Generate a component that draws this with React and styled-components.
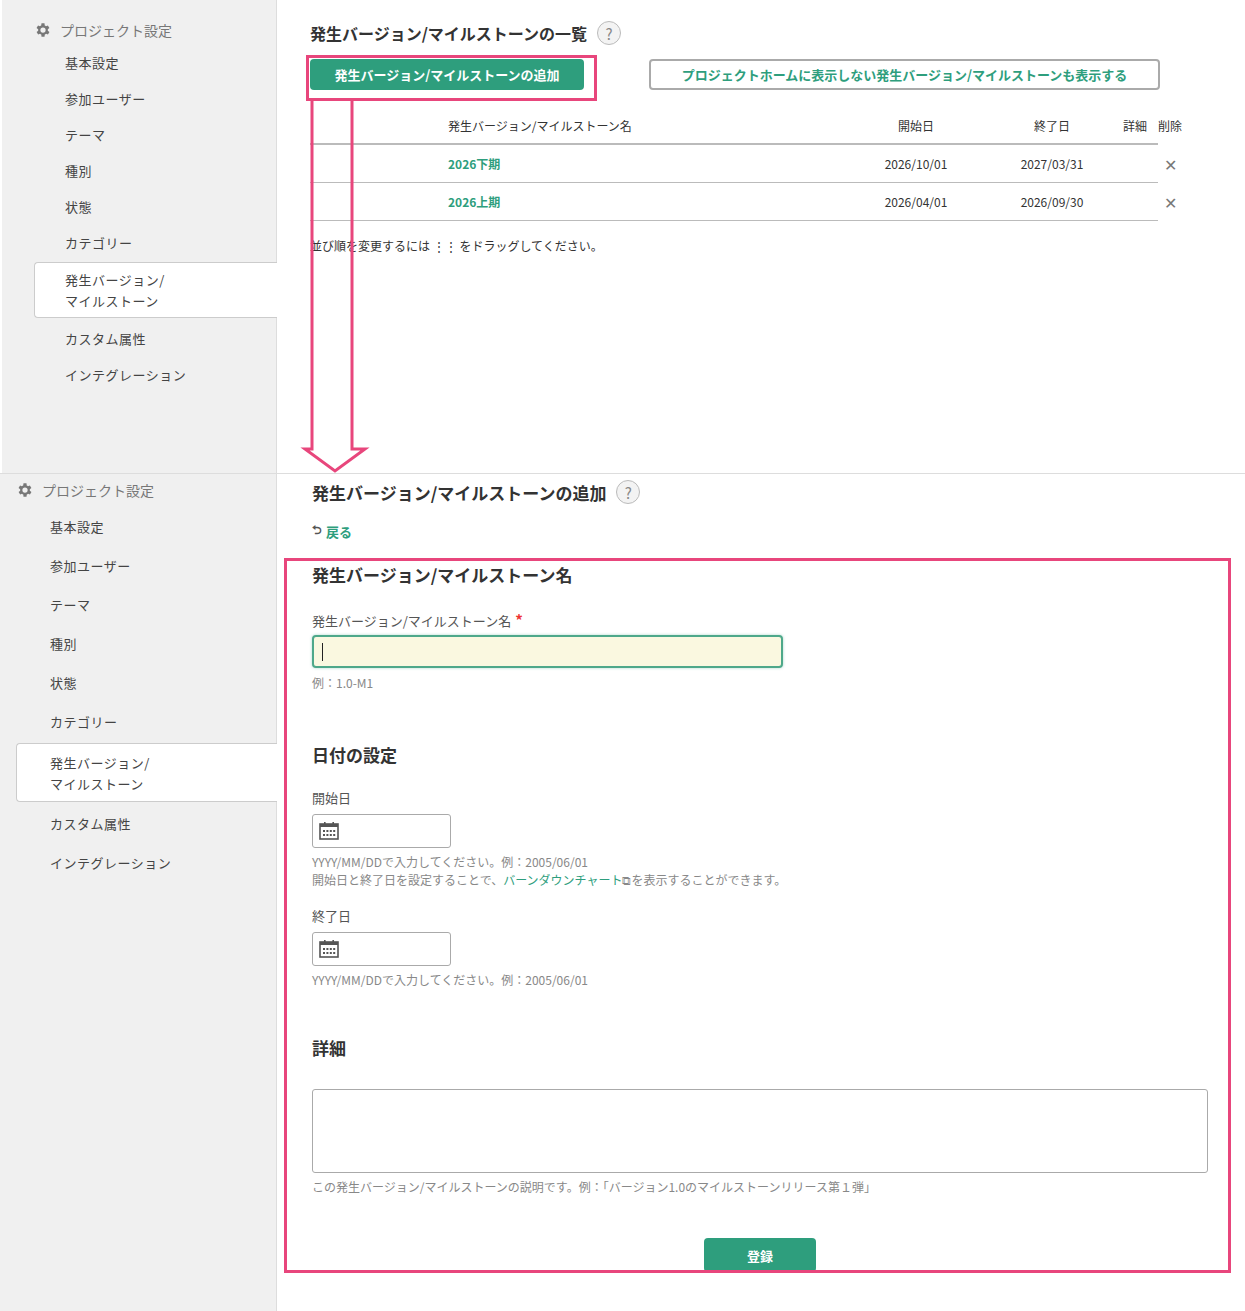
import React from 'react';
import styled, { createGlobalStyle } from 'styled-components';

const Global = createGlobalStyle`
  body { margin: 0; font-family: "Noto Sans CJK JP", "Noto Sans", sans-serif; color: #333; background: #fff; }
`;

const green = '#2e9e7d';
const pink = '#e8467c';

const Page = styled.div`
  position: relative;
  width: 1245px;
  height: 1311px;
  overflow: hidden;
`;

const Panel = styled.div`
  display: flex;
  height: ${p => p.h}px;
  padding-left: ${p => p.inset}px;
  border-top: ${p => (p.top ? '1px solid #ddd' : 'none')};
`;

const Sidebar = styled.div`
  width: ${p => p.w}px;
  flex-shrink: 0;
  background: #f0f0f0;
  border-right: 1px solid #ddd;
  padding-top: ${p => p.pt}px;
  box-sizing: border-box;
`;

const SideHead = styled.div`
  display: flex;
  align-items: center;
  gap: 8px;
  padding-left: ${p => p.pl}px;
  font-size: 14px;
  color: #777;
  height: 22px;
  margin-bottom: ${p => p.mb}px;
`;

const SideItem = styled.div`
  padding-left: ${p => p.pl}px;
  font-size: 13px;
  color: #444;
  height: ${p => p.h}px;
  display: flex;
  align-items: center;
  line-height: 21px;
  letter-spacing: 0.5px;
  ${p => p.active && `
    background: #fff;
    border: 1px solid #ccc;
    border-right: none;
    border-radius: 4px 0 0 4px;
    margin-left: ${p.ml}px;
    padding-left: ${p.pl - p.ml - 1}px;
    margin-right: -1px;
    height: ${p.ah}px;
    margin-top: 2px;
    margin-bottom: 2px;
  `}
`;

const Main = styled.div`
  flex: 1;
  padding: ${p => p.pad};
  box-sizing: border-box;
`;

const Title = styled.h1`
  margin: 0;
  font-size: ${p => p.fs || 16}px;
  font-weight: 700;
  color: #333;
  display: flex;
  align-items: center;
  gap: 10px;
  height: 24px;
`;

const Help = styled.span`
  width: 22px;
  height: 22px;
  border-radius: 50%;
  border: 1px solid #bbb;
  background: #f3f3f3;
  color: #888;
  font-size: 15px;
  font-weight: 400;
  display: inline-flex;
  align-items: center;
  justify-content: center;
`;

const ButtonRow = styled.div`
  display: flex;
  align-items: center;
  gap: 65px;
  margin-top: 14px;
`;

const PrimaryBtn = styled.button`
  background: ${green};
  color: #fff;
  border: none;
  border-radius: 4px;
  font: 700 13px "Noto Sans CJK JP", sans-serif;
  height: ${p => p.h || 31}px;
  width: ${p => p.w}px;
  cursor: pointer;
`;

const OutlineBtn = styled.button`
  background: #fff;
  color: ${green};
  border: 2px solid #aaa;
  border-radius: 4px;
  font: 700 13px "Noto Sans CJK JP", sans-serif;
  height: 31px;
  width: 511px;
`;

const Table = styled.div`
  width: 848px;
  margin-top: 18px;
  font-size: 12px;
`;

const Row = styled.div`
  display: grid;
  grid-template-columns: 138px 400px 136px 136px 30px 40px;
  align-items: center;
  height: ${p => (p.head ? 35 : 37)}px;
  border-bottom: ${p => (p.head ? '2px solid #bbb' : '1px solid #bbb')};
  color: #333;
  & > span:nth-child(3), & > span:nth-child(4) { text-align: center; }
  & > span:nth-child(5), & > span:nth-child(6) { text-align: center; }
`;

const NameLink = styled.span`
  color: ${green};
  font-weight: 700;
`;

const Del = styled.span`
  color: #777;
  font-size: 16px;
`;

const Note = styled.div`
  font-size: 12px;
  margin-top: 16px;
  color: #333;
`;

const Back = styled.div`
  margin-top: 16px;
  font-size: 13px;
  color: ${green};
  font-weight: 700;
  display: flex;
  align-items: center;
  gap: 4px;
  & span { color: #555; font-size: 12px; }
`;

const Form = styled.div`
  margin-top: 20px;
  padding-left: 27px;
`;

const SectionHead = styled.h2`
  margin: ${p => p.mt}px 0 0;
  font-size: 17px;
  font-weight: 700;
  height: 26px;
`;

const Label = styled.div`
  font-size: 13px;
  color: #555;
  margin-top: ${p => p.mt}px;
  height: 20px;
  & b { color: #e33; font-size: 15px; margin-left: 4px; }
`;

const TextInput = styled.div`
  margin-top: 6px;
  width: 471px;
  height: 33px;
  box-sizing: border-box;
  border: 2px solid #4ea88a;
  border-radius: 4px;
  background: #faf8e0;
  box-shadow: 0 0 3px rgba(46,158,125,0.4);
  display: flex;
  align-items: center;
  padding-left: 8px;
  &::before { content: ""; width: 1px; height: 18px; background: #222; }
`;

const DateInput = styled.div`
  margin-top: 6px;
  width: 139px;
  height: 34px;
  box-sizing: border-box;
  border: 1px solid #aaa;
  border-radius: 3px;
  display: flex;
  align-items: center;
  padding-left: 6px;
`;

const Hint = styled.div`
  font-size: 12px;
  color: #888;
  line-height: 18px;
  margin-top: ${p => p.mt || 6}px;
  & a { color: ${green}; text-decoration: none; }
`;

const TextArea = styled.div`
  margin-top: 28px;
  width: 896px;
  height: 84px;
  box-sizing: border-box;
  border: 1px solid #aaa;
  border-radius: 3px;
`;

const Center = styled.div`
  display: flex;
  justify-content: center;
  width: 896px;
  margin-top: 42px;
`;

const Overlay = styled.div`
  position: absolute;
  left: ${p => p.x}px;
  top: ${p => p.y}px;
  width: ${p => p.w}px;
  height: ${p => p.h}px;
  border: 3px solid ${pink};
  box-sizing: border-box;
  pointer-events: none;
`;

const ArrowSvg = styled.svg`
  position: absolute;
  left: 300px;
  top: 97px;
  pointer-events: none;
`;

const Gear = () => (
  <svg width="18" height="18" viewBox="0 0 24 24" fill="#777">
    <path d="M19.4 13a7.8 7.8 0 0 0 0-2l2.1-1.6-2-3.5-2.5 1a7.6 7.6 0 0 0-1.7-1L15 3h-4l-.4 2.9a7.6 7.6 0 0 0-1.7 1l-2.5-1-2 3.5L6.6 11a7.8 7.8 0 0 0 0 2l-2.1 1.6 2 3.5 2.5-1c.5.4 1.1.7 1.7 1L11 21h4l.4-2.9c.6-.3 1.2-.6 1.7-1l2.5 1 2-3.5zM13 15.5a3.5 3.5 0 1 1 0-7 3.5 3.5 0 0 1 0 7z" transform="translate(-1 0)" />
  </svg>
);

const Cal = () => (
  <svg width="20" height="18" viewBox="0 0 20 18">
    <rect x="1" y="2" width="18" height="15" fill="none" stroke="#555" strokeWidth="1.6" />
    <rect x="1" y="2" width="18" height="3" fill="#555" />
    <rect x="5" y="0" width="1.6" height="4" fill="#555" />
    <rect x="13.4" y="0" width="1.6" height="4" fill="#555" />
    {[0, 1, 2, 3].map(i => [0, 1].map(j => (
      <rect key={i + '-' + j} x={4 + i * 3.4} y={8 + j * 4} width="2" height="2" fill="#555" />
    )))}
  </svg>
);

const items = ['基本設定', '参加ユーザー', 'テーマ', '種別', '状態', 'カテゴリー'];
const after = ['カスタム属性', 'インテグレーション'];

function SideNav({ w, pt, headPl, itemPl, h, ah, ml, mb }) {
  return (
    <Sidebar w={w} pt={pt}>
      <SideHead pl={headPl} mb={mb}><Gear />プロジェクト設定</SideHead>
      {items.map(t => <SideItem key={t} pl={itemPl} h={h}>{t}</SideItem>)}
      <SideItem active pl={itemPl} ml={ml} ah={ah}>発生バージョン/<br />マイルストーン</SideItem>
      {after.map(t => <SideItem key={t} pl={itemPl} h={h}>{t}</SideItem>)}
    </Sidebar>
  );
}

export default function App() {
  return (
    <Page>
      <Global />
      <Panel h={473} inset={2}>
        <SideNav w={275} pt={19} headPl={32} itemPl={63} h={36} ah={54} ml={32} mb={3} />
        <Main pad="21px 0 0 33px">
          <Title>発生バージョン/マイルストーンの一覧 <Help>?</Help></Title>
          <ButtonRow>
            <PrimaryBtn w={274}>発生バージョン/マイルストーンの追加</PrimaryBtn>
            <OutlineBtn>プロジェクトホームに表示しない発生バージョン/マイルストーンも表示する</OutlineBtn>
          </ButtonRow>
          <Table>
            <Row head><span /><span>発生バージョン/マイルストーン名</span><span>開始日</span><span>終了日</span><span>詳細</span><span>削除</span></Row>
            <Row><span /><NameLink>2026下期</NameLink><span>2026/10/01</span><span>2027/03/31</span><span /><Del>✕</Del></Row>
            <Row><span /><NameLink>2026上期</NameLink><span>2026/04/01</span><span>2026/09/30</span><span /><Del>✕</Del></Row>
          </Table>
          <Note>並び順を変更するには ⋮⋮ をドラッグしてください。</Note>
        </Main>
      </Panel>
      <Panel h={837} inset={0} top>
        <SideNav w={277} pt={5} headPl={16} itemPl={50} h={39} ah={57} ml={16} mb={6} />
        <Main pad="6px 0 0 35px">
          <Title fs={17}>発生バージョン/マイルストーンの追加 <Help>?</Help></Title>
          <Back><span>⮌</span>戻る</Back>
          <Form style={{ marginLeft: -27 }}>
            <SectionHead mt={0}>発生バージョン/マイルストーン名</SectionHead>
            <Label mt={21}>発生バージョン/マイルストーン名<b>*</b></Label>
            <TextInput />
            <Hint>例：1.0-M1</Hint>
            <SectionHead mt={50}>日付の設定</SectionHead>
            <Label mt={20}>開始日</Label>
            <DateInput><Cal /></DateInput>
            <Hint mt={5}>YYYY/MM/DDで入力してください。例：2005/06/01<br />開始日と終了日を設定することで、<a>バーンダウンチャート</a>⧉を表示することができます。</Hint>
            <Label mt={17}>終了日</Label>
            <DateInput><Cal /></DateInput>
            <Hint mt={5}>YYYY/MM/DDで入力してください。例：2005/06/01</Hint>
            <SectionHead mt={46}>詳細</SectionHead>
            <TextArea />
            <Hint mt={5}>この発生バージョン/マイルストーンの説明です。例：「バージョン1.0のマイルストーンリリース第１弾」</Hint>
            <Center><PrimaryBtn w={112} h={34}>登録</PrimaryBtn></Center>
          </Form>
        </Main>
      </Panel>
      <Overlay x={306} y={55} w={291} h={46} />
      <Overlay x={284} y={558} w={947} h={715} />
      <ArrowSvg width="70" height="380" viewBox="0 0 70 380">
        <path d="M12 2 V352 H5 L35 374 L65 352 H52 V2" fill="none" stroke={pink} strokeWidth="3" />
      </ArrowSvg>
    </Page>
  );
}
